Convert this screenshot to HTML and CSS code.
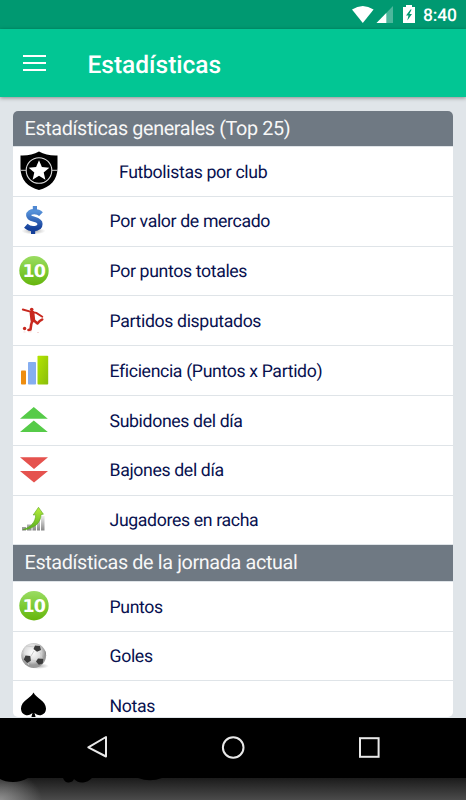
FILE: index.html
```html
<!DOCTYPE html>
<html lang="es">
<head>
    <meta charset="UTF-8">
    <meta name="viewport" content="width=device-width, initial-scale=1.0">
    <title>Estadísticas</title>
    <link rel="stylesheet" href="styles.css">
</head>
<body>
    <div class="status-bar">
        <svg class="status-icons" width="100" height="29" viewBox="0 0 100 29">
            <path fill="#fff" d="M2 9.5Q12.800 2.500 23.600 9.500L12.800 23.100Z"/>
            <path fill="#fff" fill-opacity=".3" d="M43 6v17H26.500z"/>
            <path fill="#fff" d="M36.300 13v10H26.500z"/>
            <path fill="#fff" d="M53 7h3V5h6v2h3v16H53z"/>
            <path fill="#009971" d="M60.500 9.500l-4.500 6h2.500l-1.200 5 4.700-6.500h-2.600l2.200-4.500z"/>
        </svg>
        <span class="clock">8:40</span>
    </div>

    <header class="app-bar">
        <button class="menu-btn" aria-label="Menú"><span></span><span></span><span></span></button>
        <h1>Estadísticas</h1>
    </header>

    <main class="content">
        <div class="card">
            <h2>Estadísticas generales (Top 25)</h2>
            <ul>
                <li class="club">
                    <svg class="icon" viewBox="0 0 50 50">
                        <path d="M7.500 9.500Q18 10 26 5.500 34 10 44.500 9.500V22C44.500 34 37 41 26 44 15 41 7.500 34 7.500 22z"/>
                        <path d="M8 24.300h5m26 0h5.500" stroke="#ccc" stroke-width="1"/>
                        <circle cx="26" cy="24.500" r="12.800" fill="none" stroke="#ddd" stroke-width="1.100"/>
                        <path fill="#fff" d="M26 14.200l2.900 6.900 7.400.6-5.600 4.800 1.700 7.200-6.400-3.900-6.400 3.900 1.700-7.200-5.600-4.800 7.400-.6z"/>
                    </svg>
                    <span>Futbolistas por club</span>
                </li>
                <li>
                    <svg class="icon" viewBox="0 0 50 50">
                        <defs>
                            <linearGradient id="blue" x1="0" y1="0" x2="0" y2="1">
                                <stop offset="0" stop-color="#5590d8"/>
                                <stop offset="1" stop-color="#15409a"/>
                            </linearGradient>
                            <radialGradient id="shade">
                                <stop offset="0" stop-color="#777" stop-opacity=".7"/>
                                <stop offset="1" stop-color="#999" stop-opacity="0"/>
                            </radialGradient>
                        </defs>
                        <ellipse cx="20.500" cy="35" rx="12" ry="3.500" fill="url(#shade)"/>
                        <path d="M28 18.200C26 16.200 23.500 15.700 21.200 15.700 17.500 15.700 15.700 17 15.700 19.300 15.700 24.500 27 22.200 27 28 27 31.600 24 32.700 20 32.700 17 32.700 14.700 31.500 12.800 29.800" fill="none" stroke="url(#blue)" stroke-width="5.200"/>
                        <path fill="#4f88d2" d="M19.800 10h4.200v4h-4.200z"/>
                        <path fill="#15409a" d="M18 34h4.200v4H18z"/>
                    </svg>
                    <span>Por valor de mercado</span>
                </li>
                <li>
                    <svg class="icon" viewBox="0 0 50 50">
                        <defs>
                            <linearGradient id="green" x1="0" y1="0" x2="0" y2="1">
                                <stop offset="0" stop-color="#9bdc63"/>
                                <stop offset=".5" stop-color="#7dcb35"/>
                                <stop offset="1" stop-color="#66b50d"/>
                            </linearGradient>
                        </defs>
                        <circle cx="21" cy="24.700" r="14.700" fill="url(#green)"/>
                        <text class="ten" x="20.800" y="30.500">10</text>
                    </svg>
                    <span>Por puntos totales</span>
                </li>
                <li>
                    <svg class="icon" viewBox="0 0 50 50">
                        <g fill="none" stroke="#c8281e" stroke-linecap="round" stroke-linejoin="round">
                            <path d="M9.800 13.500l7.500 2.200 6 1.200 6 3.800" stroke-width="1.900"/>
                            <path d="M19 17l.8 7" stroke-width="4.800"/>
                            <path d="M19.500 24l-1.300 4.500-.7 5-2 .4M21 24.500l3.500 3 2.200-2.500 2.500-1.500" stroke-width="2.600"/>
                        </g>
                        <circle cx="18.700" cy="13.500" r="1.800" fill="#c8281e"/>
                        <circle cx="11.600" cy="32.500" r="1.700" fill="#c8281e"/>
                        <path d="M10.500 36h2M15.500 35.800h3M24 36.500h2" stroke="#f5d9d7"/>
                    </svg>
                    <span>Partidos disputados</span>
                </li>
                <li>
                    <svg class="icon" viewBox="0 0 50 50">
                        <defs>
                            <linearGradient id="lime" x1="0" y1="0" x2="1" y2="1">
                                <stop offset="0" stop-color="#b4e500"/>
                                <stop offset="1" stop-color="#89bd0c"/>
                            </linearGradient>
                        </defs>
                        <rect x="8" y="24.500" width="5" height="14" rx=".8" fill="#ee8d10"/>
                        <rect x="15" y="16" width="8" height="22.500" rx=".8" fill="#86aef0"/>
                        <rect x="24.500" y="9.800" width="10.700" height="28.700" rx=".8" fill="url(#lime)"/>
                    </svg>
                    <span>Eficiencia (Puntos x Partido)</span>
                </li>
                <li>
                    <svg class="icon" viewBox="0 0 50 50">
                        <path fill="#56cb48" d="M20.800 12L34.800 23.700H7zM20.800 25.400L34.800 37H7z"/>
                    </svg>
                    <span>Subidones del día</span>
                </li>
                <li>
                    <svg class="icon" viewBox="0 0 50 50">
                        <path fill="#e5524e" d="M7 12.200h28L21 24zM7 26h28L21 37.500z"/>
                    </svg>
                    <span>Bajones del día</span>
                </li>
                <li>
                    <svg class="icon" viewBox="0 0 50 50">
                        <defs>
                            <linearGradient id="bars" x1="0" y1="0" x2="0" y2="1">
                                <stop offset="0" stop-color="#eee"/>
                                <stop offset="1" stop-color="#888"/>
                            </linearGradient>
                            <linearGradient id="arrow" x1="0" y1="0" x2="0" y2="1">
                                <stop offset="0" stop-color="#baf03c"/>
                                <stop offset="1" stop-color="#56ad1e"/>
                            </linearGradient>
                        </defs>
                        <path fill="url(#bars)" d="M9 32h4v3.500H9zM14 29.500h4.500v6H14zM19.500 28h3.500v7.500h-3.500zM24 24.500h3v11h-3zM28 21h3.500v14.500H28z"/>
                        <path fill="url(#arrow)" stroke="#5aa51f" stroke-width=".6" d="M25.500 12.300l4.900 6.900-2.400.3C28 27 22 34 10 34.700 18 32 22.500 27 22.700 19.800l-2.500.2z"/>
                    </svg>
                    <span>Jugadores en racha</span>
                </li>
            </ul>

            <h2>Estadísticas de la jornada actual</h2>
            <ul>
                <li>
                    <svg class="icon" viewBox="0 0 50 50">
                        <circle cx="21" cy="24.700" r="14.700" fill="url(#green)"/>
                        <text class="ten" x="20.800" y="30.500">10</text>
                    </svg>
                    <span>Puntos</span>
                </li>
                <li>
                    <svg class="icon" viewBox="0 0 50 50">
                        <defs>
                            <radialGradient id="ball" cx=".45" cy=".38">
                                <stop offset="0" stop-color="#fff"/>
                                <stop offset=".65" stop-color="#ddd"/>
                                <stop offset="1" stop-color="#999"/>
                            </radialGradient>
                            <clipPath id="ball-clip"><circle cx="20.700" cy="24.500" r="12.400"/></clipPath>
                        </defs>
                        <ellipse cx="25" cy="35" rx="11" ry="3" fill="url(#shade)"/>
                        <circle cx="20.700" cy="24.500" r="12.400" fill="url(#ball)"/>
                        <g clip-path="url(#ball-clip)">
                            <path d="M21 20l-3 5M27 21l2 6M18 29l6 1M12 25l-3-4M13 15l9 1M16 34l-2-3" stroke="#ccc"/>
                            <path fill="#3c3c3c" d="M22 14.500l5 .5 1 4-4 1.700-3.500-2.800zM12.500 24.500l4.800.6.600 4.600-3.700 2.300-3.400-3.600zM25 27.500l5.300.4-.5 4.500-4 1.300-2.800-3.200z"/>
                            <path fill="#777" d="M9 16l3-3 1 1-3.500 4zM32 19l3 5-1.500 2-1.200-3.500z"/>
                        </g>
                    </svg>
                    <span>Goles</span>
                </li>
                <li>
                    <svg class="icon" viewBox="0 0 50 50">
                        <path d="M20.500 11.500C23 17 33 20 33 27.500c0 7.500-8.500 8.500-11.500 4.300L23 37.500h-5l1.500-5.700C16.500 36 8 35 8 27.500 8 20 18 17 20.500 11.500z"/>
                    </svg>
                    <span>Notas</span>
                </li>
            </ul>
        </div>
    </main>

    <nav class="nav-bar">
        <svg width="466" height="60" viewBox="0 0 466 60" fill="none" stroke="#e8e8e8" stroke-width="2">
            <path stroke-linejoin="round" d="M106 19v19.500L88.300 29.300z"/>
            <circle cx="233.200" cy="29.500" r="10.300"/>
            <rect x="360" y="20.200" width="18.600" height="18.600"/>
        </svg>
    </nav>
    <div class="device-edge">
        <svg width="170" height="8" viewBox="0 0 170 8">
            <path d="M0 0v1Q5 4 13 4t15-4zM63 0q2 5 6 4.500T74 1q4 4 9 3.500T92 0zM138 0q12 4.500 24 0z"/>
        </svg>
    </div>
</body>
</html>
```
FILE: styles.css
```css
:root {
    --green: #02c694;
    --green-dark: #009971;
    --page-bg: #e0e5e9;
    --section-bg: #6f7983;
    --text-color: #08114f;
}

* {
    box-sizing: border-box;
}

body {
    font-family: Roboto, "Liberation Sans", sans-serif;
    text-rendering: geometricPrecision;
    background-color: #000;
    color: var(--text-color);
    margin: 0;
    height: 800px;
    display: flex;
    flex-direction: column;
    overflow: hidden;
}

.status-bar {
    height: 29px;
    flex: none;
    background-color: var(--green-dark);
    color: #fff;
    display: flex;
    align-items: center;
    padding-left: 350px;
}

.status-icons {
    flex: none;
}

.clock {
    margin-left: -27px;
    padding-top: 2px;
    font-size: 17.500px;
    font-weight: 500;
    letter-spacing: -0.2px;
}

/* App bar */
.app-bar {
    height: 68px;
    flex: none;
    background-color: var(--green);
    color: #fff;
    display: flex;
    align-items: center;
    box-shadow: 0 1px 4px rgba(0, 0, 0, 0.4);
    z-index: 1;
}

.menu-btn {
    background: none;
    border: none;
    padding: 0;
    margin: 0 42px 0 22.500px;
    width: 23px;
    display: flex;
    flex-direction: column;
    gap: 5px;
}

.menu-btn span {
    width: 100%;
    height: 2px;
    background-color: #fff;
}

.app-bar h1 {
    margin: 2px 0 0;
    font-size: 24.5px;
    font-weight: 500;
}

/* List */
.content {
    height: 621px;
    flex: none;
    background-color: var(--page-bg);
    padding: 13.500px 13px 1px;
}

.card {
    height: 606.500px;
    background-color: #fff;
    border-radius: 5px;
    overflow: hidden;
}

.card h2 {
    margin: 0;
    height: 36.500px;
    background-color: var(--section-bg);
    border-bottom: 1px solid #dfe4e8;
    color: #f7f7f7;
    padding: 0 11.500px;
    font-size: 19.800px;
    font-weight: 400;
    line-height: 36px;
    letter-spacing: -0.36px;
}

.card ul {
    list-style: none;
    margin: 0;
    padding: 0;
}

.card li {
    height: 49.800px;
    border-bottom: 1px solid #dfe4e8;
    display: flex;
    align-items: center;
    gap: 46.500px;
    font-size: 17.700px;
    letter-spacing: -0.36px;
    white-space: nowrap;
}

.card li span {
    padding-top: 2.500px;
}

.card li.club {
    gap: 56px;
}

.icon {
    width: 50px;
    height: 50px;
    flex: none;
}

.ten {
    fill: #fff;
    font: bold 17.500px "DejaVu Sans", "Open Sans", sans-serif;
    letter-spacing: -0.8px;
    text-anchor: middle;
}

/* Android navigation */
.nav-bar {
    height: 60px;
    flex: none;
    background-color: #000;
}

.device-edge {
    height: 22px;
    flex: none;
    background: radial-gradient(ellipse 42px 30px at 0 100%, rgba(190, 190, 190, 0.6), transparent), linear-gradient(#1b1b1b, #4b4b4b);
}

.device-edge svg {
    display: block;
}
```
